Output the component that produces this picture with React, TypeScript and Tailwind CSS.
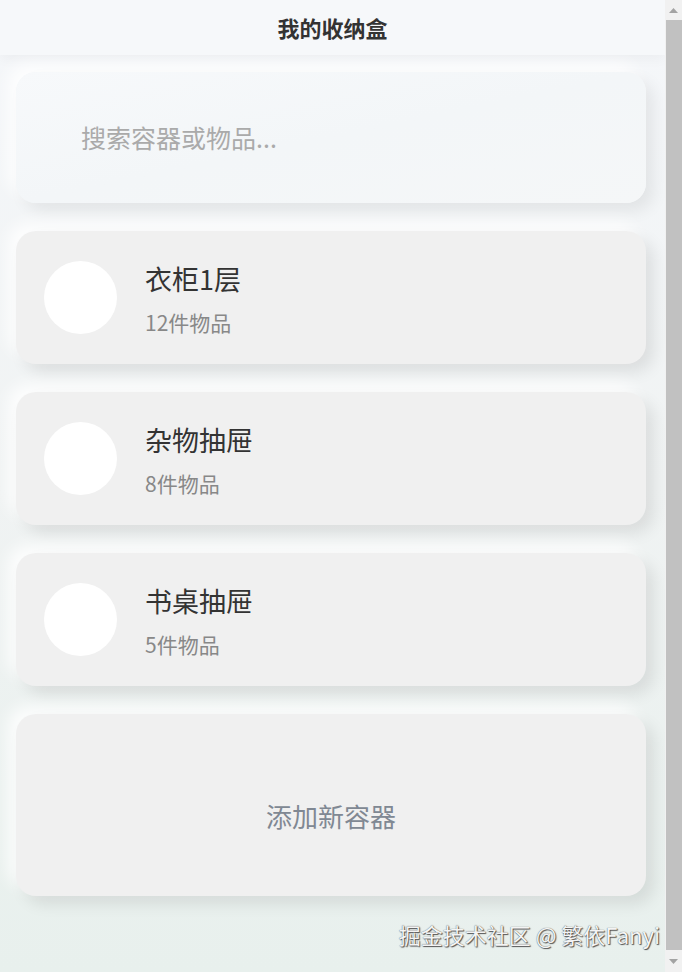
import React from 'react';

const cjk = '[font-family:"Noto_Sans_CJK_SC","Liberation_Sans",sans-serif]';

type Box = { name: string; count: number };

const boxes: Box[] = [
  { name: '衣柜1层', count: 12 },
  { name: '杂物抽屉', count: 8 },
  { name: '书桌抽屉', count: 5 },
];

/* neumorphic card shell: dark shadow bottom-right, light shadow top-left */
const card =
  'rounded-[20px] bg-[#f0f0f0] shadow-[8px_8px_16px_rgba(0,0,0,0.09),-8px_-8px_16px_rgba(255,255,255,0.85)]';

function BoxCard({ box }: { box: Box }) {
  return (
    <div className={`${card} flex h-[133px] items-center gap-[28px] px-[28px]`}>
      <div className="h-[73px] w-[73px] shrink-0 rounded-full bg-white" />
      <div className="flex flex-col pt-[2px]">
        <div className="text-[27px] leading-[32px] text-[#333]">{box.name}</div>
        <div className="mt-[14px] text-[21px] leading-[26px] text-[#888]">{box.count}件物品</div>
      </div>
    </div>
  );
}

/* the window scrollbar as the screenshot shows it */
function Scrollbar() {
  return (
    <div className="flex w-[17px] shrink-0 flex-col items-stretch bg-[#f1f1f1]">
      <div className="flex h-[20px] items-center justify-center">
        <svg width="9" height="5" viewBox="0 0 9 5"><path d="M0 5 L4.5 0 L9 5 Z" fill="#a3a3a3" /></svg>
      </div>
      <div className="ml-[1px] flex-1 bg-[#c1c1c1]" />
      <div className="flex h-[22px] items-center justify-center">
        <svg width="9" height="5" viewBox="0 0 9 5"><path d="M0 0 L9 0 L4.5 5 Z" fill="#a3a3a3" /></svg>
      </div>
    </div>
  );
}

export default function App() {
  return (
    <div className={`${cjk} flex h-[972px] overflow-hidden`}>
      <div className="flex-1 bg-gradient-to-b from-[#f5f7fa] via-[#f0f3f3] to-[#e8f0ed]">
        {/* Header */}
        <header className="flex h-[55px] items-center justify-center bg-[#f6f8fa] shadow-[0_4px_12px_rgba(0,0,0,0.04)]">
          <h1 className="text-[22px] font-bold text-[#333]">我的收纳盒</h1>
        </header>

        <main className="flex flex-col gap-[28px] pl-[16px] pr-[19px] pt-[17px]">
          {/* Search */}
          <div className="flex h-[131px] items-center rounded-[20px] bg-gradient-to-br from-[#f7f9fb] via-[#f3f6f8] to-[#f5f7f8] pl-[65px] shadow-[8px_8px_16px_rgba(0,0,0,0.07),-8px_-8px_16px_rgba(255,255,255,0.85)]">
            <input
              className={`${cjk} w-full bg-transparent text-[25px] text-[#333] outline-none placeholder:text-[#aaa]`}
              placeholder="搜索容器或物品..."
            />
          </div>

          {boxes.map((b) => (
            <BoxCard key={b.name} box={b} />
          ))}

          {/* Add new */}
          <div className={`${card} flex h-[182px] items-center justify-center pt-[20px]`}>
            <span className="text-[26px] text-[#808893]">添加新容器</span>
          </div>
        </main>

        <div className="flex justify-end pr-[5px] pt-[22px]">
          <span className="text-[22px] text-[#f4f4f4] [text-shadow:0_0_1px_#444,1px_1px_1px_#555]">
            掘金技术社区 @ 繁依Fanyi
          </span>
        </div>
      </div>
      <Scrollbar />
    </div>
  );
}
